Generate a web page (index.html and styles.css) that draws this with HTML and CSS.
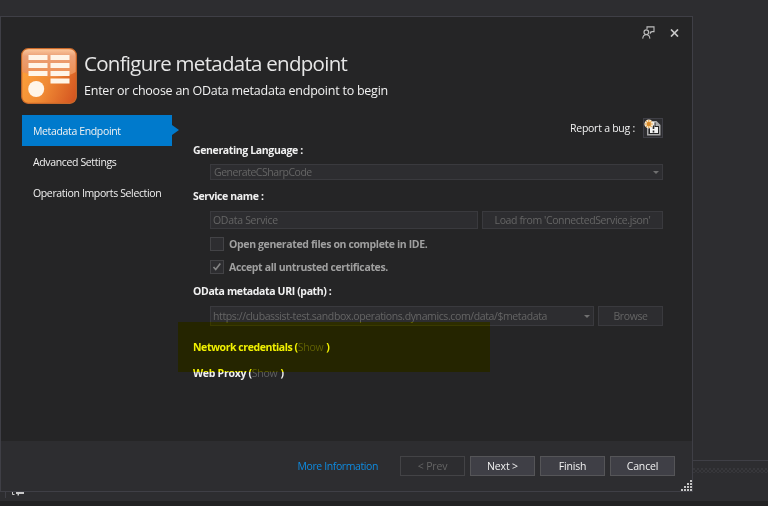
FILE: index.html
```
<!DOCTYPE html>
<html lang="en">
<head>
<meta charset="utf-8">
<title>Configure metadata endpoint</title>
<link rel="stylesheet" href="styles.css">
</head>
<body>
<div class="desktop">
  <div class="shell-line"></div>
  <div class="shell-dots"></div>
  <div class="shell-bottom"></div>
  <svg class="shell-glyph" width="26" height="8" viewBox="0 0 26 8"><path d="M1.500 0v6" stroke="#3f3f46"/><path d="M8.500 0v2.500h2" stroke="#c8c8c8" fill="none"/><path d="M12 0h8v2h-5v1.500h-1.500V2H12z" fill="#c8c8c8"/></svg>
  <main class="dialog">
    <div class="content">
      <div class="titlebar">
        <svg width="13" height="13" viewBox="0 0 13 13" fill="none" stroke="#bdbdbd" stroke-width="1.1"><path d="M5 3V.9h7v4.700H9.800L8.300 7.200V5.600"/><circle cx="4.300" cy="6.200" r="2.300"/><path d="M.7 12.600C.9 10 2.500 8.700 4.300 8.700S7.700 10 7.900 12.600"/></svg>
        <svg width="9" height="8" viewBox="0 0 9 8"><path d="M1 .5l7 7M8 .5l-7 7" stroke="#c8c8c8" stroke-width="1.700"/></svg>
      </div>
      <header class="header">
        <svg class="logo" width="56" height="56" viewBox="0 0 56 56">
          <defs>
            <linearGradient id="base" x1="0" y1=".6" x2="1" y2="1"><stop offset="0" stop-color="#fb9d3a"/><stop offset=".4" stop-color="#f08a34"/><stop offset="1" stop-color="#d2511f"/></linearGradient>
            <linearGradient id="gloss" x1="0" y1="0" x2="0" y2="1"><stop offset="0" stop-color="#fbc79c"/><stop offset=".25" stop-color="#eba076"/><stop offset="1" stop-color="#ed8e50"/></linearGradient>
          </defs>
          <rect x=".7" y=".7" width="54.600" height="54.600" rx="6.500" fill="url(#base)" stroke="#c9692a" stroke-width="1.200"/>
          <path d="M1.300 24V8q0-6.700 6.700-6.700h40q6.700 0 6.700 6.700v16Q47 29.500 28 28.500T1.300 24z" fill="url(#gloss)"/>
          <g fill="#fff5e8"><path d="M7.500 7h19v5h-19zM29.500 7h19v5h-19zM7.500 15h19v5h-19zM29.500 15h19v5h-19zM7.500 23h19v5h-19zM29.500 23h19v5h-19zM29.500 30.500h19v5h-19z"/><circle cx="15.200" cy="41" r="8"/></g>
        </svg>
        <div class="heading">
          <h1>Configure metadata endpoint</h1>
          <p>Enter or choose an OData metadata endpoint to begin</p>
        </div>
      </header>
      <div class="columns">
        <nav class="nav">
          <div class="nav-item active">Metadata Endpoint</div>
          <div class="nav-item">Advanced Settings</div>
          <div class="nav-item">Operation Imports Selection</div>
        </nav>
        <section class="form">
          <div class="bug"><span>Report a bug :</span>
            <div class="bug-button"><svg width="18" height="18" viewBox="0 0 18 18"><path d="M3 2h9.500l4 4V16.500H3z" fill="#a9a9aa"/><path d="M4.500 3.500h7v3.500H15v8H4.500z" fill="#252526"/><path d="M6 3h4.500v5H14v6H6z" fill="#f1f1f1"/><path d="M9.500 6.500v3.500M9.500 11.500v2" stroke="#252526" stroke-width="1.600"/><circle cx="4.800" cy="5" r="4.400" fill="#f6ead8"/><path d="M4.800 1v8M.8 5h8M2 2.200l5.600 5.600M7.600 2.200L2 7.800" stroke="#e5a345" stroke-width="1.100"/><circle cx="4.800" cy="5" r="2" fill="#d98a2b"/></svg></div>
          </div>
          <div class="label l-lang">Generating Language :</div>
          <div class="field select lang"><span>GenerateCSharpCode</span><i class="caret"></i></div>
          <div class="label l-name">Service name :</div>
          <div class="row service">
            <div class="field"><span>OData Service</span></div>
            <div class="field button"><span>Load from 'ConnectedService.json'</span></div>
          </div>
          <div class="check"><span class="box"></span><span>Open generated files on complete in IDE.</span></div>
          <div class="check"><span class="box"><svg width="12" height="12" viewBox="0 0 12 12"><path d="M2.500 6l2.200 2.500L9.300 2.500" fill="none" stroke="#858585" stroke-width="1.600"/></svg></span><span>Accept all untrusted certificates.</span></div>
          <div class="label l-uri">OData metadata URI (path) :</div>
          <div class="row uri">
            <div class="field select"><span>https://clubassist-test.sandbox.operations.dynamics.com/data/$metadata</span><i class="caret"></i></div>
            <div class="field button"><span>Browse</span></div>
          </div>
          <div class="label l-net">Network credentials (<span class="show">Show</span>)</div>
          <div class="label l-proxy">Web Proxy (<span class="show">Show</span>)</div>
        </section>
      </div>
    </div>
    <footer class="footer">
      <a class="more">More Information</a>
      <div class="btn off">&lt; Prev</div>
      <div class="btn">Next &gt;</div>
      <div class="btn">Finish</div>
      <div class="btn">Cancel</div>
      <svg class="grip" width="11" height="11" viewBox="0 0 11 11" fill="#c4c4c4"><path d="M9 0h2v2H9zM6 3h2v2H6zM9 3h2v2H9zM3 6h2v2H3zM6 6h2v2H6zM9 6h2v2H9zM0 9h2v2H0zM3 9h2v2H3zM6 9h2v2H6zM9 9h2v2H9z"/></svg>
    </footer>
  </main>
  <div class="highlight"></div>
</div>
</body>
</html>
```
FILE: styles.css
```
* { box-sizing: border-box; }
body {
  margin: 0;
  background: #2d2d30;
  color: #f1f1f1;
  font: 10.5px/14px "Open Sans", "Noto Sans", sans-serif;
  overflow: hidden;
}
.desktop { position: relative; height: 506px; padding-top: 16px; white-space: nowrap; }
.shell-line { position: absolute; left: 693px; right: 0; top: 460px; height: 1px; background: #3f3f46; }
.shell-dots {
  position: absolute; left: 693px; right: 0; top: 468px; height: 5px;
  background: radial-gradient(circle at 1px 1px, #3b3b3f .6px, transparent 1px) 0 0 / 4px 4px,
              radial-gradient(circle at 3px 3px, #3b3b3f .6px, transparent 1px) 0 0 / 4px 4px;
}
.shell-bottom { position: absolute; left: 0; right: 0; bottom: 0; height: 5px; background: #222223; }
.shell-glyph { position: absolute; left: 4px; top: 492px; }
.dialog {
  width: 693px; height: 476px;
  display: flex; flex-direction: column;
  border: 1px solid #3f3f46;
  background: #252526;
}
.content { flex: 1; }
.titlebar { display: flex; justify-content: flex-end; align-items: center; gap: 15px; height: 31px; padding-right: 13px; }
.header { display: flex; gap: 7px; height: 67px; padding-left: 20px; }
h1 { margin: 0; font-size: 20.5px; line-height: 30px; font-weight: 400; color: #e6e6e6; letter-spacing: -.72px; }
.heading p { margin: 4px 0 0; font-size: 12.5px; line-height: 18px; letter-spacing: -.24px; }
.columns { display: flex; gap: 21px; padding-left: 21px; }
.nav { width: 150px; }
.nav-item { height: 31px; padding-left: 11px; line-height: 32px; letter-spacing: -.36px; }
.active { position: relative; background: #007acc; }
.active::after {
  content: ""; position: absolute; left: 150px; top: 10px;
  border: 5.5px solid transparent; border-left: 7px solid #007acc; border-right: 0;
}
.form { width: 470px; }
.bug { display: flex; justify-content: flex-end; align-items: center; gap: 8px; height: 20px; margin-top: 3px; letter-spacing: -.25px; }
.bug-button { width: 20px; height: 20px; border: 1px solid #3f3f46; background: #2d2d30; }
.bug-button svg { display: block; }
.label { height: 14px; font-weight: 700; letter-spacing: -.37px; }
.l-lang { margin-top: 5px; }
.field {
  display: flex; align-items: center;
  border: 1px solid #3a3a3e; background: #2d2d30; color: #656565;
  letter-spacing: -.39px;
}
.select { justify-content: space-between; padding: 0 3px; }
.caret { border: 3px solid transparent; border-top-color: #707070; border-bottom: 0; }
.lang { height: 16px; margin: 7px 0 0 17px; letter-spacing: -.47px; line-height: 16px; }
.l-name { margin-top: 9px; }
.row { display: grid; margin-left: 17px; gap: 4px; }
.service { grid-template-columns: 268px 181px; height: 18px; margin-top: 8px; }
.service .field:first-child { padding-left: 2px; letter-spacing: -.3px; }
.field.button { justify-content: center; }
.check { display: flex; align-items: center; gap: 5px; height: 14px; margin: 8px 0 0 17px; color: #a0a0a0; font-weight: 700; letter-spacing: -.36px; }
.check + .check { margin-top: 9px; }
.box { width: 14px; height: 14px; border: 1px solid #434346; background: #2d2d30; }
.box svg { display: block; }
.l-uri { margin-top: 10px; }
.uri { grid-template-columns: 384px 65px; height: 20px; margin-top: 8px; }
.uri .select { padding-left: 2px; }
.l-net { margin-top: 14px; letter-spacing: -.43px; }
.l-proxy { margin-top: 12px; letter-spacing: -.28px; }
.show { font-weight: 400; color: #606060; margin-right: 3px; letter-spacing: -.25px; }
.footer { position: relative; display: flex; align-items: center; justify-content: flex-end; gap: 5px; height: 50px; padding-right: 17px; background: #2d2d30; }
.more { color: #0e8be0; margin-right: 17px; letter-spacing: -.4px; }
.btn { width: 65px; height: 20px; border: 1px solid #555558; background: #3f3f46; text-align: center; line-height: 18px; letter-spacing: -.15px; }
.off { background: #2d2d30; border-color: #434346; color: #656565; }
.grip { position: absolute; right: 0; bottom: 0; }
.highlight { position: absolute; left: 178px; top: 322px; width: 312px; height: 50px; background: #ffff00; mix-blend-mode: multiply; }
```
